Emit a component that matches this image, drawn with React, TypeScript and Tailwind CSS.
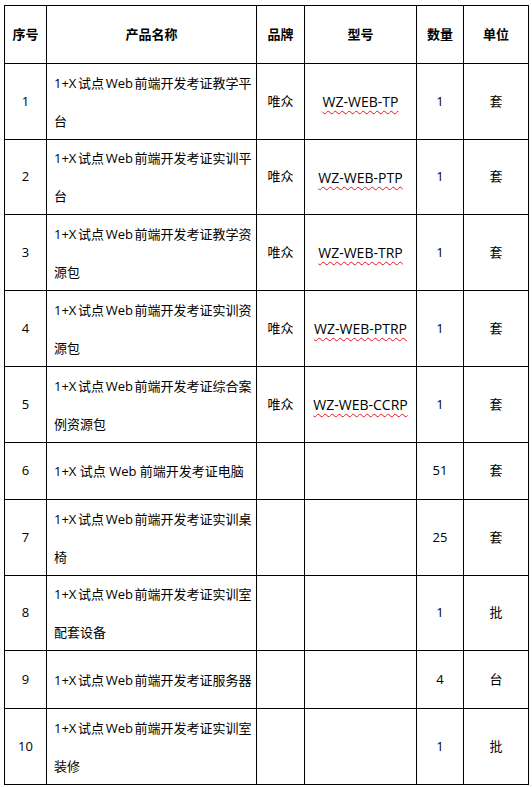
// Equipment list table: 10 products with brand, model, quantity and unit.

interface Item {
  no: string;
  name: string[];
  brand: string;
  model: string;
  qty: string;
  unit: string;
}

const items: Item[] = [
  { no: "1", name: ["1+X试点Web前端开发考证教学平", "台"], brand: "唯众", model: "WZ-WEB-TP", qty: "1", unit: "套" },
  { no: "2", name: ["1+X试点Web前端开发考证实训平", "台"], brand: "唯众", model: "WZ-WEB-PTP", qty: "1", unit: "套" },
  { no: "3", name: ["1+X试点Web前端开发考证教学资", "源包"], brand: "唯众", model: "WZ-WEB-TRP", qty: "1", unit: "套" },
  { no: "4", name: ["1+X试点Web前端开发考证实训资", "源包"], brand: "唯众", model: "WZ-WEB-PTRP", qty: "1", unit: "套" },
  { no: "5", name: ["1+X试点Web前端开发考证综合案", "例资源包"], brand: "唯众", model: "WZ-WEB-CCRP", qty: "1", unit: "套" },
  { no: "6", name: ["1+X 试点 Web 前端开发考证电脑"], brand: "", model: "", qty: "51", unit: "套" },
  { no: "7", name: ["1+X试点Web前端开发考证实训桌", "椅"], brand: "", model: "", qty: "25", unit: "套" },
  { no: "8", name: ["1+X试点Web前端开发考证实训室", "配套设备"], brand: "", model: "", qty: "1", unit: "批" },
  { no: "9", name: ["1+X试点Web前端开发考证服务器"], brand: "", model: "", qty: "4", unit: "台" },
  { no: "10", name: ["1+X试点Web前端开发考证实训室", "装修"], brand: "", model: "", qty: "1", unit: "批" },
];

const cell = "flex items-center justify-center border-r border-b border-black";

export default function App() {
  return (
    <div className="min-h-screen bg-white pt-[5px] pl-1 font-['Open_Sans','Noto_Sans_CJK_SC',sans-serif] text-[13px] text-black [text-autospace:normal]">
      <div className="grid w-fit grid-cols-[42px_210px_48px_112px_47px_65px] grid-rows-[58px_76px_75px_76px_76px_76px_57px_76px_75px_58px_76px] border-t border-l border-black">
        {/* Header */}
        {["序号", "产品名称", "品牌", "型号", "数量", "单位"].map((h) => (
          <div key={h} className={`${cell} font-bold`}>
            {h}
          </div>
        ))}

        {items.map((it) => (
          <div key={it.no} className="contents">
            <div className={cell}>{it.no}</div>
            <div className="flex flex-col justify-center border-r border-b border-black pl-[7px]">
              {it.name.map((line, i) => (
                <span key={i} className="whitespace-nowrap leading-[38px]">
                  {line}
                </span>
              ))}
            </div>
            <div className={cell}>{it.brand}</div>
            <div className={cell}>
              {it.model ? (
                <span className="text-[14px] underline decoration-wavy decoration-[#e81123] decoration-1 underline-offset-[3px]">
                  {it.model}
                </span>
              ) : null}
            </div>
            <div className={cell}>{it.qty}</div>
            <div className={cell}>{it.unit}</div>
          </div>
        ))}
      </div>
    </div>
  );
}
